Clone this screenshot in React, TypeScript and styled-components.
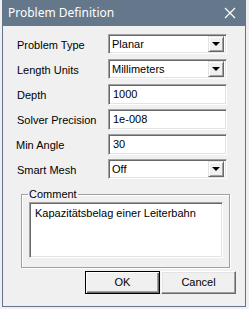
import styled, { createGlobalStyle } from 'styled-components';

const GlobalStyle = createGlobalStyle`
    html, body {
        margin: 0;
        padding: 0;
        background: #f0f0f0;
    }
    body {
        font-family: "Liberation Sans", Arial, sans-serif;
        font-size: 11px;
        color: #000;
    }
`

const Page = styled.div`
    width: 249px;
    height: 309px;
    padding: 0 3px 2px 2px;
    box-sizing: border-box;
`

const Window = styled.div`
    width: 244px;
    height: 307px;
    box-sizing: border-box;
    border: 1px solid #62758a;
    border-top: none;
    background: #f0f0f0;
    display: flex;
    flex-direction: column;
`

const TitleBar = styled.div`
    height: 26px;
    margin: 0 -1px;
    background: #64778b;
    color: #fff;
    display: flex;
    align-items: center;
    justify-content: space-between;
    padding: 0 10px 0 6px;
    font-family: "Noto Sans", "Liberation Sans", sans-serif;
    font-size: 12px;
`

const Title = styled.span`
    padding-bottom: 1px;
`

const Body = styled.div`
    flex: 1;
    padding: 8px 9px 11px 14px;
    display: flex;
    flex-direction: column;
`

const Form = styled.div`
    display: grid;
    grid-template-columns: 91px 119px;
    grid-auto-rows: 20px;
    row-gap: 5px;
    align-items: center;
`

const Label = styled.label<{ $shift?: number }>`
    margin-left: ${p => p.$shift ?? 0}px;
    margin-top: 1px;
    white-space: nowrap;
`

const sunken = `
    box-sizing: border-box;
    border: 1px solid;
    border-color: #a0a0a0 #ffffff #ffffff #a0a0a0;
    box-shadow: inset 1px 1px 0 #696969, inset -1px -1px 0 #e3e3e3;
    background: #fff;
`

const Field = styled.div`
    ${sunken}
    height: 21px;
    display: flex;
    align-items: center;
    padding-left: 4px;
`

const Combo = styled.div`
    ${sunken}
    height: 20px;
    display: flex;
    align-items: center;
    justify-content: space-between;
    padding: 2px 2px 2px 3px;
`

const DropButton = styled.div`
    width: 16px;
    height: 16px;
    box-sizing: border-box;
    background: #f0f0f0;
    border: 1px solid;
    border-color: #e3e3e3 #696969 #696969 #e3e3e3;
    box-shadow: inset 1px 1px 0 #fff, inset -1px -1px 0 #a0a0a0;
    display: flex;
    align-items: center;
    justify-content: center;
`

const Arrow = styled.span`
    width: 0;
    height: 0;
    border-left: 4px solid transparent;
    border-right: 4px solid transparent;
    border-top: 4px solid #000;
`

const Group = styled.fieldset`
    margin: 9px 6px 0 4px;
    padding: 1px 6px 9px 7px;
    border: 1px solid #a0a0a0;
    box-shadow: 1px 1px 0 #fff, inset 1px 1px 0 #fff;
`

const Legend = styled.legend`
    padding: 0 1px;
    margin-left: -1px;
    line-height: 13px;
`

const Memo = styled.div`
    ${sunken}
    height: 56px;
    padding: 4px 5px;
`

const Buttons = styled.div`
    display: flex;
    justify-content: flex-end;
    gap: 1px;
    margin-top: 3px;
`

const Button = styled.button<{ $default?: boolean }>`
    width: 75px;
    height: 23px;
    box-sizing: border-box;
    font: inherit;
    color: #000;
    background: #f0f0f0;
    padding: 0 0 1px;
    border: 1px solid;
    border-color: ${p => p.$default ? '#000' : '#fff #696969 #696969 #fff'};
    box-shadow: ${p => p.$default
        ? 'inset 1px 1px 0 #fff, inset -1px -1px 0 #696969, inset -2px -2px 0 #a0a0a0'
        : 'inset -1px -1px 0 #a0a0a0, inset 1px 1px 0 #e3e3e3'};
`

function Close() {
    return (
        <svg width="12" height="12" viewBox="0 0 12 12">
            <path d="M1 1 L11 11 M11 1 L1 11" stroke="#fff" strokeWidth="1.2" />
        </svg>
    )
}

function Select({ value }: { value: string }) {
    return (
        <Combo>
            <span>{value}</span>
            <DropButton><Arrow /></DropButton>
        </Combo>
    )
}

export default function App() {
    return (
        <Page>
            <GlobalStyle />
            <Window>
                <TitleBar>
                    <Title>Problem Definition</Title>
                    <Close />
                </TitleBar>
                <Body>
                    <Form>
                        <Label>Problem Type</Label>
                        <Select value="Planar" />
                        <Label>Length Units</Label>
                        <Select value="Millimeters" />
                        <Label>Depth</Label>
                        <Field>1000</Field>
                        <Label>Solver Precision</Label>
                        <Field>1e-008</Field>
                        <Label $shift={-1}>Min Angle</Label>
                        <Field>30</Field>
                        <Label>Smart Mesh</Label>
                        <Select value="Off" />
                    </Form>
                    <Group>
                        <Legend>Comment</Legend>
                        <Memo>Kapazitätsbelag einer Leiterbahn</Memo>
                    </Group>
                    <Buttons>
                        <Button $default>OK</Button>
                        <Button>Cancel</Button>
                    </Buttons>
                </Body>
            </Window>
        </Page>
    )
}
